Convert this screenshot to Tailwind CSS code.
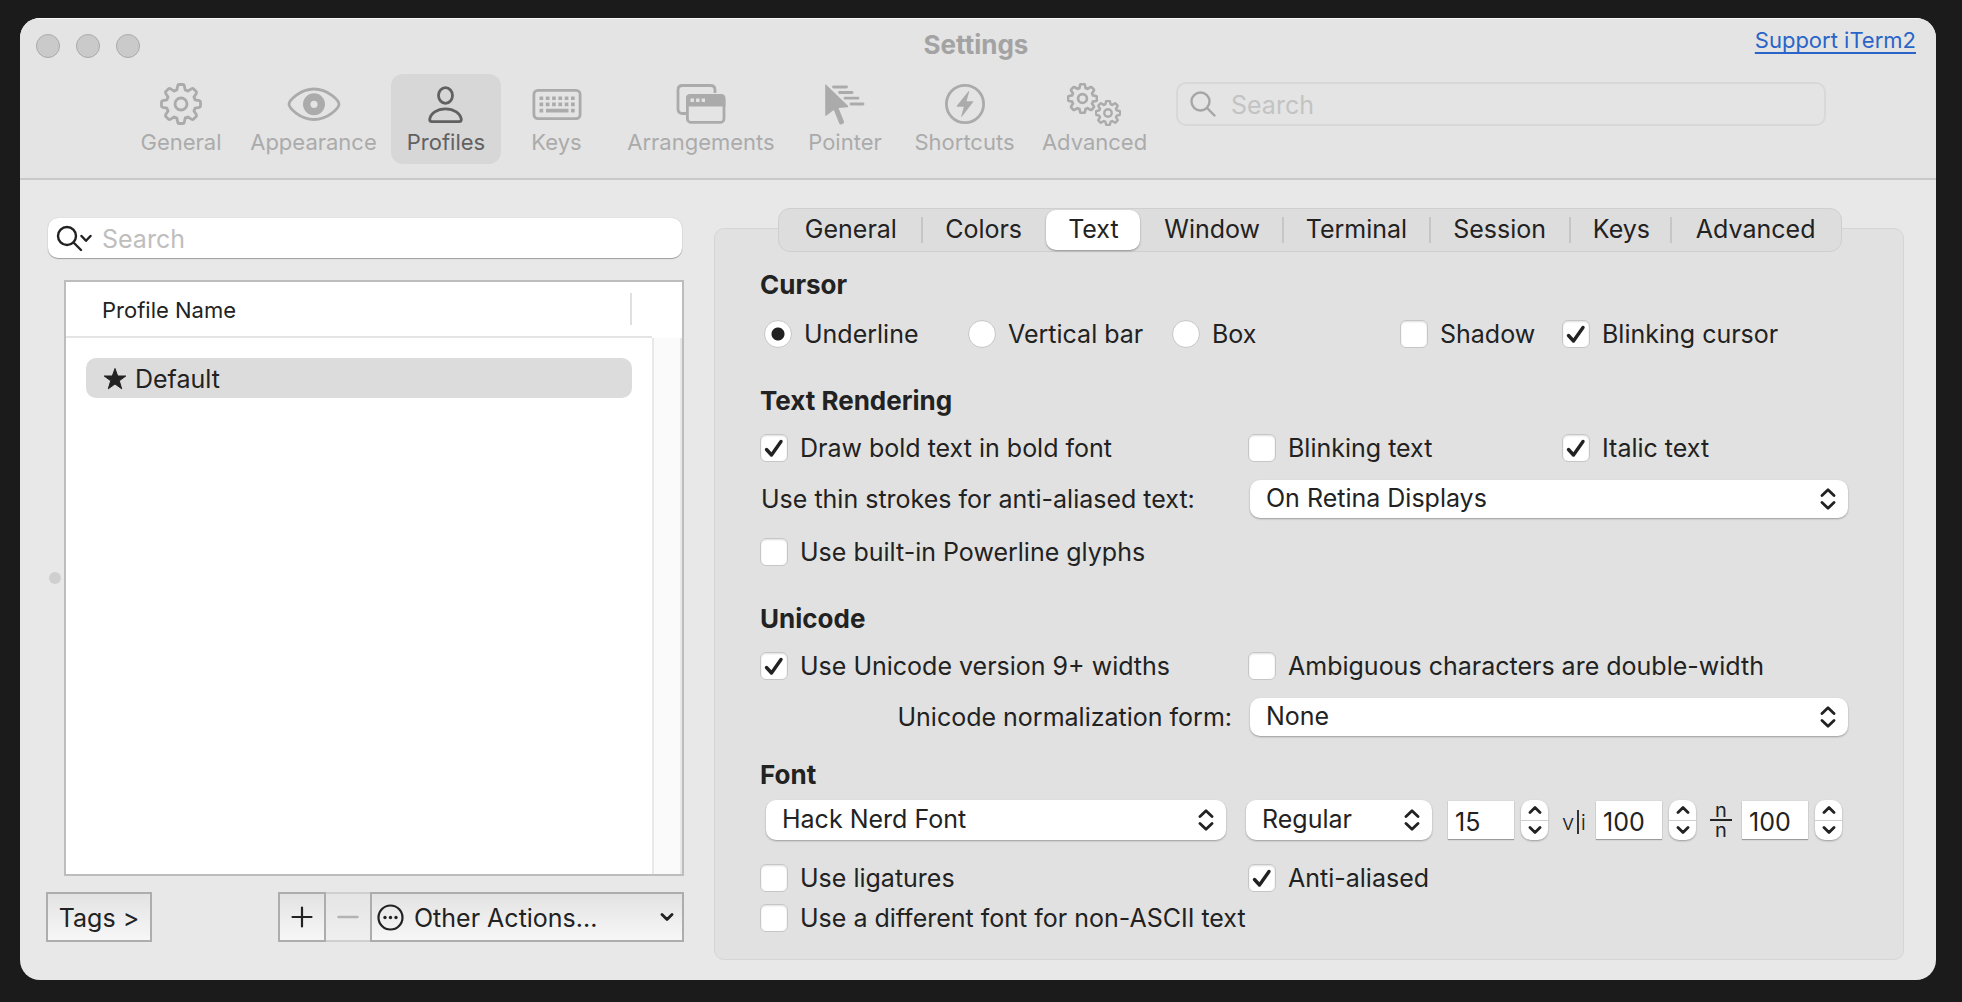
<!DOCTYPE html>
<html lang="en">
<head>
<meta charset="utf-8">
<meta name="viewport" content="width=device-width, initial-scale=1">
<title>Settings</title>
<script src="https://cdn.jsdelivr.net/npm/@tailwindcss/browser@4"></script>
</head>
<body class="bg-[#1b1b1b] font-['Inter',sans-serif] text-[25px] leading-8 text-[#222]">

<!-- Shared icon shapes -->
<svg class="hidden" aria-hidden="true">
  <symbol id="gear" viewBox="-21 -21 42 42">
    <g fill="none" stroke="currentColor" stroke-linejoin="round">
      <path d="M-4.200-14-3.300-18.300Q-3-19.500-2-19.500H2Q3-19.500 3.300-18.300L4.200-14Q5.600-13.800 6.900-12.900L10.600-15.300Q11.700-15.900 12.400-15.200L15.200-12.400Q15.900-11.700 15.300-10.600L12.900-6.900Q13.800-5.600 14-4.200L18.300-3.300Q19.500-3 19.500-2V2Q19.500 3 18.300 3.300L14 4.200Q13.800 5.600 12.900 6.900L15.300 10.600Q15.900 11.700 15.200 12.400L12.400 15.200Q11.700 15.900 10.600 15.300L6.900 12.900Q5.600 13.800 4.200 14L3.300 18.300Q3 19.500 2 19.500H-2Q-3 19.500-3.300 18.300L-4.200 14Q-5.600 13.800-6.900 12.900L-10.600 15.300Q-11.700 15.900-12.400 15.200L-15.200 12.400Q-15.900 11.700-15.300 10.600L-12.900 6.900Q-13.800 5.600-14 4.200L-18.300 3.300Q-19.500 3-19.500 2V-2Q-19.500-3-18.300-3.300L-14-4.200Q-13.800-5.600-12.900-6.900L-15.300-10.600Q-15.900-11.700-15.200-12.400L-12.400-15.200Q-11.700-15.900-10.600-15.300L-6.900-12.900Q-5.600-13.800-4.200-14Z"/>
      <circle r="6"/>
    </g>
  </symbol>
  <symbol id="check" viewBox="0 0 28 28">
    <path fill="none" stroke="#222" stroke-width="3.4" stroke-linecap="round" stroke-linejoin="round" d="M6.5 15.5 11.5 21 21 7.5"/>
  </symbol>
  <symbol id="updown" viewBox="0 0 16 22">
    <path fill="none" stroke="#222" stroke-width="2.8" stroke-linecap="round" stroke-linejoin="round" d="M2 7.5 8 1.8 14 7.5M2 14.5 8 20.2 14 14.5"/>
  </symbol>
  <symbol id="up" viewBox="0 0 14 8">
    <path fill="none" stroke="#222" stroke-width="2.8" stroke-linecap="round" stroke-linejoin="round" d="M2 6.5 7 1.5 12 6.5"/>
  </symbol>
  <symbol id="down" viewBox="0 0 14 8">
    <path fill="none" stroke="#222" stroke-width="2.8" stroke-linecap="round" stroke-linejoin="round" d="M2 1.5 7 6.5 12 1.5"/>
  </symbol>
</svg>

<div class="flex min-h-screen pt-[18px] pr-[26px] pb-[22px] pl-5">
<main class="flex flex-1 flex-col overflow-hidden rounded-[20px] bg-[#e8e8e8]">

  <header class="border-b-2 border-[#c9c9c9] bg-[#e4e4e4] pb-[14px] shadow-[inset_0_1px_0_#f8f8f8]">
    <div class="grid h-14 grid-cols-[1fr_auto_1fr] items-center pr-5 pl-4">
      <div class="flex gap-4">
        <button aria-label="Close" class="size-6 rounded-full border border-[#a9a9a9] bg-[#cacaca]"></button>
        <button aria-label="Minimize" class="size-6 rounded-full border border-[#a9a9a9] bg-[#cacaca]"></button>
        <button aria-label="Zoom" class="size-6 rounded-full border border-[#a9a9a9] bg-[#cacaca]"></button>
      </div>
      <h1 class="pb-0.5 text-[26px] font-bold text-[#a3a3a3]">Settings</h1>
      <a href="#" class="mt-2 self-start justify-self-end text-[22px] leading-7 text-[#2a64c8] underline decoration-2 underline-offset-4">Support iTerm2</a>
    </div>

    <div class="flex pr-[110px] pl-[106px]">
      <nav class="flex text-[22px] leading-7 text-[#ababab]">
        <button class="flex h-[90px] w-[110px] flex-col items-center gap-0.5 pt-2">
          <svg class="h-11 w-[42px]" stroke-width="2.800"><use href="#gear"/></svg>General
        </button>
        <button class="flex h-[90px] w-[155px] flex-col items-center gap-0.5 pt-2">
          <svg class="h-11 w-[54px]" viewBox="0 0 54 44" fill="none" stroke="currentColor" stroke-width="2.8">
            <path stroke-linejoin="round" d="M2 22.3C2 19 12.500 7 27 7S52 19 52 22.300 41.500 37.500 27 37.500 2 25.600 2 22.300Z"/>
            <circle cx="27" cy="22.300" r="7.300" stroke-width="7.400"/>
          </svg>Appearance
        </button>
        <button aria-current="page" class="flex h-[90px] w-[110px] flex-col items-center gap-0.5 rounded-xl bg-[#d7d7d7] pt-2 text-[#616161]">
          <svg class="h-11 w-9" viewBox="0 0 36 44" fill="none" stroke="currentColor" stroke-width="2.800">
            <ellipse cx="17.500" cy="13.500" rx="7" ry="7.800"/>
            <path stroke-linejoin="round" d="M4 39.700Q1.700 39.700 1.700 37.500C2.500 31.500 9 26.800 17.500 26.800S32.500 31.500 33.300 37.500Q33.300 39.700 31 39.700Z"/>
          </svg>Profiles
        </button>
        <button class="flex h-[90px] w-[111px] flex-col items-center gap-0.5 pt-2">
          <svg class="h-11 w-[50px]" viewBox="0 0 50 44" fill="none" stroke="currentColor">
            <rect x="1.900" y="8.400" width="46.200" height="28.200" rx="4" stroke-width="2.800"/>
            <path stroke-width="3.600" stroke-dasharray="3.700 2.600" d="M7.500 16.200H43M7.500 22.400H43"/>
            <path stroke-width="3.600" d="M7.500 28.600h3.700M14 28.600h22.500M39 28.600h3.700"/>
          </svg>Keys
        </button>
        <button class="flex h-[90px] w-[178px] flex-col items-center gap-0.5 pt-2">
          <svg class="h-11 w-[50px]" viewBox="0 0 50 44" fill="none" stroke="currentColor" stroke-width="2.800">
            <path d="M10.500 31.500H6.500Q2 31.500 2 27V8Q2 3.500 6.500 3.500H34.500Q39 3.500 39 8V11"/>
            <rect x="11.400" y="13.400" width="36.600" height="27" rx="4"/>
            <path fill="currentColor" stroke="none" d="M10 24.500V16Q10 12 14 12H45Q49.400 12 49.400 16V24.500Z"/>
            <path stroke="#e4e4e4" stroke-width="3.400" stroke-dasharray="3.400 2.200" d="M14.500 18.200H29"/>
          </svg>Arrangements
        </button>
        <button class="flex h-[90px] w-[110px] flex-col items-center gap-0.5 pt-2">
          <svg class="h-11 w-[42px]" viewBox="0 0 42 44" fill="currentColor">
            <path d="M1.200 3Q1.200 1.800 2.200 2.800L24 23.800Q24.800 25 23.500 25.200L14.500 26 20 39.500Q20.400 41 19.200 41.500L17 42.500Q15.800 42.800 15.300 41.500L9.800 28 2.500 33.500Q1.200 34.300 1.200 33Z"/>
            <path fill="none" stroke="currentColor" stroke-width="2.800" stroke-linecap="round" d="M9.500 5H22.500M15.500 10.500H28M21 16.200H34M27 22H39"/>
          </svg>Pointer
        </button>
        <button class="flex h-[90px] w-[129px] flex-col items-center gap-0.5 pt-2">
          <svg class="h-11 w-[42px]" viewBox="0 0 42 44" fill="currentColor">
            <circle cx="21" cy="22" r="18.600" fill="none" stroke="currentColor" stroke-width="2.800"/>
            <path d="M24.500 9.200Q25.500 8.500 25.200 9.800L22.500 19.200H28.500Q29.800 19.200 29 20.300L18 34.500Q17 35.300 17.300 34L19.800 24.700H13.500Q12.200 24.700 13 23.500Z"/>
          </svg>Shortcuts
        </button>
        <button class="flex h-[90px] w-[131px] flex-col items-center gap-0.5 pt-2">
          <svg class="h-11 w-14" viewBox="0 0 56 44">
            <use href="#gear" x="0" y="1" width="31" height="31" stroke-width="3.600"/>
            <use href="#gear" x="28" y="18" width="26" height="26" stroke-width="3.900"/>
          </svg>Advanced
        </button>
      </nav>
      <label class="mt-2 ml-4 flex h-11 flex-1 items-center gap-[15px] rounded-[10px] border-2 border-[#d8d8d8] px-3">
        <svg class="size-[26px]" viewBox="0 0 26 26" fill="none" stroke="#a6a6a6" stroke-width="2.400" stroke-linecap="round"><circle cx="10.500" cy="10.500" r="9"/><path d="M17.200 17.200 24.500 24.500"/></svg>
        <input type="search" aria-label="Search settings" placeholder="Search" class="min-w-0 flex-1 bg-transparent pt-0.5 outline-none placeholder:text-[#c3c3c3]">
      </label>
    </div>
  </header>

  <div class="grid flex-1 grid-cols-[638fr_1190fr] gap-[30px] pr-8 pl-[26px]">

    <!-- Profile list -->
    <section class="flex flex-col pt-[38px] pb-[38px]">
      <label class="mr-0.5 ml-0.5 flex h-10 items-center gap-2.5 rounded-[10px] bg-white px-2 shadow-[0_1px_1px_#9d9d9d,0_0_1px_#b5b5b5]">
        <svg class="h-7 w-9" viewBox="0 0 36 28" fill="none" stroke="#222" stroke-width="2.400" stroke-linecap="round" stroke-linejoin="round"><circle cx="11" cy="12" r="9"/><path d="M17.500 18.500 25 26M25.500 12 30 16.800 34.500 12"/></svg>
        <input type="search" aria-label="Search profiles" placeholder="Search" class="min-w-0 flex-1 bg-transparent pt-0.5 outline-none placeholder:text-[#bebebe]">
      </label>

      <div class="mt-[22px] flex flex-1 items-center gap-[3px] pl-[3px]">
        <div class="size-3 shrink-0 rounded-full bg-[#cfcfcf]"></div>
        <div class="flex flex-1 flex-col self-stretch border-2 border-[#bdbdbd] bg-white">
          <div class="flex flex-1">
            <table class="block flex-1">
              <thead class="block border-b-2 border-[#e4e4e4]">
                <tr class="flex h-[54px] items-center">
                  <th class="mr-5 h-8 flex-1 border-r-2 border-[#e0e0e0] pt-px pl-9 text-left text-[22px] font-normal">Profile Name</th>
                </tr>
              </thead>
              <tbody class="block pt-5 pr-5 pl-5">
                <tr class="block">
                  <td class="flex h-10 items-center gap-2 rounded-[10px] bg-[#dcdcdc] px-[17px] pt-0.5">
                    <svg class="h-6 w-6" viewBox="0 0 24 24" fill="#222" stroke="#222" stroke-width="1" stroke-linejoin="round"><path d="M12 1.500 14.700 9H22.800L16.300 13.800 18.700 21.800 12 17 5.300 21.800 7.700 13.800 1.200 9H9.300Z"/></svg>
                    Default
                  </td>
                </tr>
              </tbody>
            </table>
            <div class="mt-14 w-[30px] border-x-2 border-[#e8e8e8] bg-[#fafafa]"></div>
          </div>
        </div>
      </div>

      <div class="mt-4 flex h-[50px]">
        <button class="w-[106px] border-2 border-[#adadad] bg-linear-to-b from-[#e3e3e3] to-[#f7f7f7] pt-0.5">Tags &gt;</button>
        <div class="flex-1"></div>
        <button aria-label="Add profile" class="grid w-12 place-items-center border-2 border-[#adadad] bg-linear-to-b from-[#e3e3e3] to-[#f7f7f7]">
          <svg class="size-6" viewBox="0 0 24 24" stroke="#222" stroke-width="2.200" stroke-linecap="round"><path d="M12 2.500V21.500M2.500 12H21.500"/></svg>
        </button>
        <button aria-label="Remove profile" disabled class="grid w-11 place-items-center border-y-2 border-[#cfcfcf] bg-linear-to-b from-[#e5e5e5] to-[#efefef]">
          <svg class="size-6" viewBox="0 0 24 24" stroke="#b3b3b3" stroke-width="2.400" stroke-linecap="round"><path d="M2.500 12H21.500"/></svg>
        </button>
        <button class="flex w-[314px] items-center gap-2.5 border-2 border-[#adadad] bg-linear-to-b from-[#e3e3e3] to-[#f7f7f7] pr-2 pl-[5px]">
          <svg class="size-[27px]" viewBox="0 0 27 27" fill="#222"><circle cx="13.500" cy="13.500" r="12" fill="none" stroke="#222" stroke-width="2.200"/><circle cx="8" cy="13.500" r="1.700"/><circle cx="13.500" cy="13.500" r="1.700"/><circle cx="19" cy="13.500" r="1.700"/></svg>
          <span class="flex-1 pt-0.5 text-left">Other Actions...</span>
          <svg class="h-2 w-3.5"><use href="#down"/></svg>
        </button>
      </div>
    </section>

    <!-- Profile settings -->
    <section class="pt-12 pb-5">
      <div class="h-full rounded-[10px] border border-[#d5d5d5] bg-[#e1e1e1] pb-[26px]">
        <nav class="mr-[61px] -mt-[21px] ml-[63px] grid h-11 grid-cols-[144fr_124fr_94fr_144fr_147fr_140fr_102fr_169fr] items-center rounded-xl border border-[#cfcfcf] bg-[#dddddd] leading-6">
          <button class="pb-0.5">General</button>
          <button class="-ml-0.5 border-l-2 border-[#c6c6c6] pr-0.5 pb-0.5">Colors</button>
          <button aria-current="page" class="h-10 rounded-[10px] bg-white pb-0.5 shadow-[0_1px_2px_#8f8f8f]">Text</button>
          <button class="pb-0.5">Window</button>
          <button class="-ml-0.5 border-l-2 border-[#c6c6c6] pr-0.5 pb-0.5">Terminal</button>
          <button class="-ml-0.5 border-l-2 border-[#c6c6c6] pr-0.5 pb-0.5">Session</button>
          <button class="-ml-0.5 border-l-2 border-[#c6c6c6] pb-0.5">Keys</button>
          <button class="-ml-0.5 border-l-2 border-[#c6c6c6] pr-0.5 pb-0.5">Advanced</button>
        </nav>

        <div class="pr-[55px] pl-[45px]">
          <h2 class="mt-[17px] text-[26px] font-bold">Cursor</h2>
          <div class="mt-[19px] grid grid-cols-[208fr_204fr_228fr_162fr_286fr] leading-7 whitespace-nowrap">
            <label class="flex items-center gap-3 pl-1"><input type="radio" name="cursor" checked class="size-7 appearance-none rounded-full border border-[#c6c6c6] bg-white checked:bg-[radial-gradient(circle,#222_6px,#fff_7px)]">Underline</label>
            <label class="flex items-center gap-3"><input type="radio" name="cursor" class="size-7 appearance-none rounded-full border border-[#c6c6c6] bg-white checked:bg-[radial-gradient(circle,#222_6px,#fff_7px)]">Vertical bar</label>
            <label class="flex items-center gap-3"><input type="radio" name="cursor" class="size-7 appearance-none rounded-full border border-[#c6c6c6] bg-white checked:bg-[radial-gradient(circle,#222_6px,#fff_7px)]">Box</label>
            <label class="flex items-center gap-3"><input type="checkbox" class="size-7 appearance-none rounded-md border border-[#c6c6c6] bg-white shadow-[inset_0_1px_2px_#ddd]">Shadow</label>
            <label class="flex items-center gap-3"><span class="grid"><input type="checkbox" checked class="peer size-7 appearance-none rounded-md border border-[#c6c6c6] bg-white shadow-[inset_0_1px_2px_#ddd] [grid-area:1/1]"><svg class="pointer-events-none invisible size-7 [grid-area:1/1] peer-checked:visible"><use href="#check"/></svg></span>Blinking cursor</label>
          </div>

          <h2 class="mt-[37px] text-[26px] font-bold">Text Rendering</h2>
          <div class="mt-[17px] grid grid-cols-[488fr_314fr_286fr] leading-7 whitespace-nowrap">
            <label class="flex items-center gap-3"><span class="grid"><input type="checkbox" checked class="peer size-7 appearance-none rounded-md border border-[#c6c6c6] bg-white shadow-[inset_0_1px_2px_#ddd] [grid-area:1/1]"><svg class="pointer-events-none invisible size-7 [grid-area:1/1] peer-checked:visible"><use href="#check"/></svg></span>Draw bold text in bold font</label>
            <label class="flex items-center gap-3"><input type="checkbox" class="size-7 appearance-none rounded-md border border-[#c6c6c6] bg-white shadow-[inset_0_1px_2px_#ddd]">Blinking text</label>
            <label class="flex items-center gap-3"><span class="grid"><input type="checkbox" checked class="peer size-7 appearance-none rounded-md border border-[#c6c6c6] bg-white shadow-[inset_0_1px_2px_#ddd] [grid-area:1/1]"><svg class="pointer-events-none invisible size-7 [grid-area:1/1] peer-checked:visible"><use href="#check"/></svg></span>Italic text</label>
          </div>
          <div class="mt-[17px] grid h-10 grid-cols-[490fr_598fr] items-center whitespace-nowrap">
            <label for="thin" class="pl-px">Use thin strokes for anti-aliased text:</label>
            <div class="grid items-center">
              <select id="thin" class="h-[38px] w-full appearance-none rounded-[10px] bg-white pb-0.5 pl-4 shadow-[0_1px_2px_#9b9b9b] [grid-area:1/1]"><option>On Retina Displays</option></select>
              <svg class="pointer-events-none mr-3 h-[22px] w-4 justify-self-end [grid-area:1/1]"><use href="#updown"/></svg>
            </div>
          </div>
          <label class="mt-[19px] flex items-center gap-3 leading-7"><input type="checkbox" class="size-7 appearance-none rounded-md border border-[#c6c6c6] bg-white shadow-[inset_0_1px_2px_#ddd]">Use built-in Powerline glyphs</label>

          <h2 class="mt-[37px] text-[26px] font-bold">Unicode</h2>
          <div class="mt-[17px] grid grid-cols-[488fr_600fr] leading-7 whitespace-nowrap">
            <label class="flex items-center gap-3"><span class="grid"><input type="checkbox" checked class="peer size-7 appearance-none rounded-md border border-[#c6c6c6] bg-white shadow-[inset_0_1px_2px_#ddd] [grid-area:1/1]"><svg class="pointer-events-none invisible size-7 [grid-area:1/1] peer-checked:visible"><use href="#check"/></svg></span>Use Unicode version 9+ widths</label>
            <label class="flex items-center gap-3"><input type="checkbox" class="size-7 appearance-none rounded-md border border-[#c6c6c6] bg-white shadow-[inset_0_1px_2px_#ddd]">Ambiguous characters are double-width</label>
          </div>
          <div class="mt-[17px] grid h-10 grid-cols-[490fr_598fr] items-center whitespace-nowrap">
            <label for="norm" class="pr-[18px] text-right">Unicode normalization form:</label>
            <div class="grid items-center">
              <select id="norm" class="h-[38px] w-full appearance-none rounded-[10px] bg-white pb-0.5 pl-4 shadow-[0_1px_2px_#9b9b9b] [grid-area:1/1]"><option>None</option></select>
              <svg class="pointer-events-none mr-3 h-[22px] w-4 justify-self-end [grid-area:1/1]"><use href="#updown"/></svg>
            </div>
          </div>

          <h2 class="mt-[22px] text-[26px] font-bold">Font</h2>
          <div class="mt-[9px] flex h-10 items-center pr-1.5 pl-1.5">
            <div class="grid flex-1 items-center">
              <select aria-label="Font family" class="h-10 w-full appearance-none rounded-[10px] bg-white pb-0.5 pl-4 shadow-[0_1px_2px_#9b9b9b] [grid-area:1/1]"><option>Hack Nerd Font</option></select>
              <svg class="pointer-events-none mr-3 h-[22px] w-4 justify-self-end [grid-area:1/1]"><use href="#updown"/></svg>
            </div>
            <div class="ml-5 grid w-[186px] items-center">
              <select aria-label="Font style" class="h-10 w-full appearance-none rounded-[10px] bg-white pb-0.5 pl-4 shadow-[0_1px_2px_#9b9b9b] [grid-area:1/1]"><option>Regular</option></select>
              <svg class="pointer-events-none mr-3 h-[22px] w-4 justify-self-end [grid-area:1/1]"><use href="#updown"/></svg>
            </div>
            <input aria-label="Font size" value="15" class="ml-4 h-[38px] w-[66px] bg-white pt-[3px] pl-[7px] shadow-[0_1px_1px_#9b9b9b,0_0_1px_#b5b5b5]">
            <div class="ml-[7px] flex h-10 w-[27px] flex-col divide-y divide-[#cfcfcf] rounded-[10px] bg-white shadow-[0_1px_2px_#9b9b9b]">
              <button aria-label="Increase size" class="grid flex-1 place-items-center"><svg class="h-2 w-3.5"><use href="#up"/></svg></button>
              <button aria-label="Decrease size" class="grid flex-1 place-items-center"><svg class="h-2 w-3.5"><use href="#down"/></svg></button>
            </div>
            <label for="hspace" class="ml-[14px] flex w-6 items-center justify-between pt-1 text-[22px] leading-6 font-light"><span>v</span><span class="h-6 border-l-2 border-[#333]"></span><span>i</span></label>
            <input id="hspace" value="100" class="ml-2.5 h-[38px] w-[66px] bg-white pt-[3px] pl-[7px] shadow-[0_1px_1px_#9b9b9b,0_0_1px_#b5b5b5]">
            <div class="ml-[7px] flex h-10 w-[27px] flex-col divide-y divide-[#cfcfcf] rounded-[10px] bg-white shadow-[0_1px_2px_#9b9b9b]">
              <button aria-label="Increase horizontal spacing" class="grid flex-1 place-items-center"><svg class="h-2 w-3.5"><use href="#up"/></svg></button>
              <button aria-label="Decrease horizontal spacing" class="grid flex-1 place-items-center"><svg class="h-2 w-3.5"><use href="#down"/></svg></button>
            </div>
            <label for="vspace" class="ml-[14px] flex w-[22px] flex-col text-center text-[20px] leading-[18px]"><span class="border-b-2 border-[#222]">n</span><span>n</span></label>
            <input id="vspace" value="100" class="ml-2.5 h-[38px] w-[66px] bg-white pt-[3px] pl-[7px] shadow-[0_1px_1px_#9b9b9b,0_0_1px_#b5b5b5]">
            <div class="ml-[7px] flex h-10 w-[27px] flex-col divide-y divide-[#cfcfcf] rounded-[10px] bg-white shadow-[0_1px_2px_#9b9b9b]">
              <button aria-label="Increase vertical spacing" class="grid flex-1 place-items-center"><svg class="h-2 w-3.5"><use href="#up"/></svg></button>
              <button aria-label="Decrease vertical spacing" class="grid flex-1 place-items-center"><svg class="h-2 w-3.5"><use href="#down"/></svg></button>
            </div>
          </div>
          <div class="mt-6 grid grid-cols-[488fr_600fr] leading-7 whitespace-nowrap">
            <label class="flex items-center gap-3"><input type="checkbox" class="size-7 appearance-none rounded-md border border-[#c6c6c6] bg-white shadow-[inset_0_1px_2px_#ddd]">Use ligatures</label>
            <label class="flex items-center gap-3"><span class="grid"><input type="checkbox" checked class="peer size-7 appearance-none rounded-md border border-[#c6c6c6] bg-white shadow-[inset_0_1px_2px_#ddd] [grid-area:1/1]"><svg class="pointer-events-none invisible size-7 [grid-area:1/1] peer-checked:visible"><use href="#check"/></svg></span>Anti-aliased</label>
          </div>
          <label class="mt-3 flex items-center gap-3 leading-7"><input type="checkbox" class="size-7 appearance-none rounded-md border border-[#c6c6c6] bg-white shadow-[inset_0_1px_2px_#ddd]">Use a different font for non-ASCII text</label>
        </div>
      </div>
    </section>
  </div>
</main>
</div>
</body>
</html>
